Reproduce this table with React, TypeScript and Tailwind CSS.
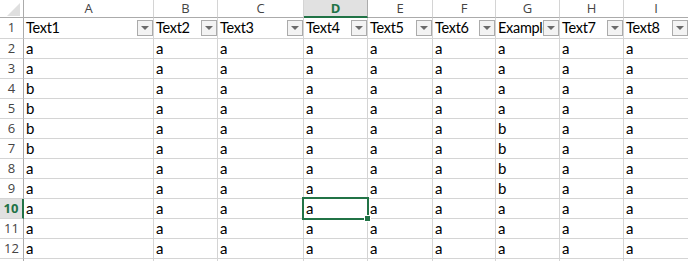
import React from 'react';

type Col = { letter: string; header: string };

const COLS: Col[] = [
  { letter: 'A', header: 'Text1' },
  { letter: 'B', header: 'Text2' },
  { letter: 'C', header: 'Text3' },
  { letter: 'D', header: 'Text4' },
  { letter: 'E', header: 'Text5' },
  { letter: 'F', header: 'Text6' },
  { letter: 'G', header: 'Example' },
  { letter: 'H', header: 'Text7' },
  { letter: 'I', header: 'Text8' },
];

// values for rows 2..13, column A and G differ, the rest are 'a'
const COL_A = ['a', 'a', 'b', 'b', 'b', 'b', 'a', 'a', 'a', 'a', 'a', ''];
const COL_G = ['a', 'a', 'a', 'a', 'b', 'b', 'b', 'b', 'a', 'a', 'a', ''];

const ACTIVE_COL = 'D';
const ACTIVE_ROW = 10;

const cellFont = { fontFamily: 'Lato, "Liberation Sans", sans-serif' };
const headFont = { fontFamily: '"Open Sans", "Noto Sans", sans-serif' };

const FilterButton: React.FC = () => (
  <div className="absolute right-0 top-[2px] w-[16px] h-[16px] border border-[#ababab] bg-[#f3f3f3] flex items-center justify-center">
    <div className="w-0 h-0 border-x-[4px] border-t-[4px] border-x-transparent border-t-[#6a6a6a]" />
  </div>
);

const App: React.FC = () => {
  const dataRows = Array.from({ length: 12 }, (_, i) => i + 2);

  return (
    <div className="relative w-[688px] h-[261px] overflow-hidden bg-white">
      <div className="grid grid-cols-[24px_130px_64px_86px_64px_65px_63px_64px_64px_65px] grid-rows-[18px_21px_repeat(12,20px)]">
        {/* corner */}
        <div className="border-r border-b border-[#ababab] flex items-end justify-end pr-[3px] pb-[1px]">
          <svg width="13" height="13" viewBox="0 0 13 13">
            <polygon points="0,13 13,13 13,0" fill="#dfdfdf" />
          </svg>
        </div>

        {/* column letters */}
        {COLS.map((c) =>
          c.letter === ACTIVE_COL ? (
            <div
              key={c.letter}
              style={headFont}
              className="bg-[#e1e1e1] border-r border-[#ababab] border-b-2 border-b-[#217346] flex items-center justify-center text-[13px] leading-[15px] pt-[1px] font-bold text-[#217346]"
            >
              {c.letter}
            </div>
          ) : (
            <div
              key={c.letter}
              style={headFont}
              className="border-r border-r-[#d4d4d4] border-b border-b-[#ababab] flex items-center justify-center text-[13px] leading-[17px] text-[#444]"
            >
              {c.letter}
            </div>
          )
        )}

        {/* row 1: table headers */}
        <div
          style={headFont}
          className="border-r border-r-[#ababab] border-b border-b-[#d4d4d4] flex items-center justify-center text-[13px] text-[#444]"
        >
          1
        </div>
        {COLS.map((c) => (
          <div
            key={'h' + c.letter}
            style={cellFont}
            className="relative border-r border-b border-[#d4d4d4] pl-[2px] text-[14.5px] tracking-[-0.3px] leading-[20px] text-black whitespace-nowrap overflow-hidden"
          >
            {c.header}
            <FilterButton />
          </div>
        ))}

        {/* data rows */}
        {dataRows.map((r) => (
          <React.Fragment key={r}>
            {r === ACTIVE_ROW ? (
              <div
                style={headFont}
                className="bg-[#e1e1e1] border-r-2 border-r-[#217346] border-b border-b-[#d4d4d4] flex items-center justify-center text-[13px] font-bold text-[#217346]"
              >
                {r}
              </div>
            ) : (
              <div
                style={headFont}
                className="border-r border-r-[#ababab] border-b border-b-[#d4d4d4] flex items-center justify-center text-[13px] text-[#444]"
              >
                {r <= 12 ? r : ''}
              </div>
            )}
            {COLS.map((c) => {
              let v = r <= 12 ? 'a' : '';
              if (c.letter === 'A') v = COL_A[r - 2];
              if (c.letter === 'G') v = COL_G[r - 2];
              return (
                <div
                  key={c.letter + r}
                  style={cellFont}
                  className="border-r border-b border-[#d4d4d4] pl-[2px] text-[15px] leading-[19px] text-black whitespace-nowrap overflow-hidden"
                >
                  {v}
                </div>
              );
            })}
          </React.Fragment>
        ))}
      </div>

      {/* active cell D10 */}
      <div className="absolute left-[302px] top-[197px] w-[67px] h-[23px] border-2 border-[#217346] pointer-events-none" />
      <div className="absolute left-[364px] top-[215px] w-[7px] h-[7px] bg-[#217346] border border-white pointer-events-none" />
    </div>
  );
};

export default App;
